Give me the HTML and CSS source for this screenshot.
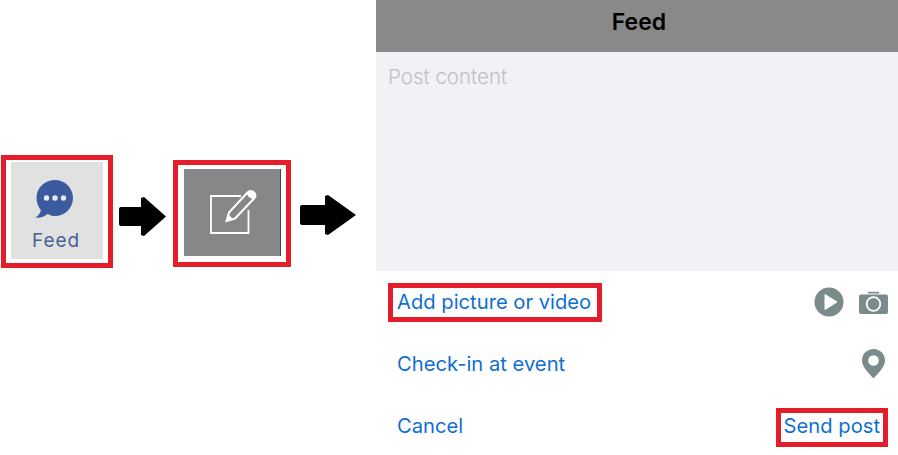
FILE: index.html
```html
<!DOCTYPE html>
<html lang="en">
<head>
  <meta charset="UTF-8">
  <meta name="viewport" content="width=device-width, initial-scale=1.0">
  <title>Feed</title>
  <link rel="stylesheet" href="styles.css">
</head>
<body>
  <div class="container">
    <div class="steps">
      <div class="red-box feed-box">
        <div class="feed-tile">
          <svg class="feed-icon" width="38" height="40" viewBox="0 0 38 40">
            <path d="M20 1C9.500 1 1.500 8.800 1.500 19c0 4.600 1.700 8.800 4.400 12C5.400 34 3.500 37 0.500 38.500c4.500 .6 9-1 12-3.600C14.800 36 17.300 37 20 37c10 0 18-8 18-18S30 1 20 1z" fill="#3c5a9e"/>
            <circle cx="11.500" cy="19" r="2.700" fill="#e6ebf5"/>
            <circle cx="20" cy="19" r="2.700" fill="#e6ebf5"/>
            <circle cx="28.500" cy="19" r="2.700" fill="#e6ebf5"/>
          </svg>
          <span class="feed-label">Feed</span>
        </div>
      </div>
      <svg class="arrow arrow-one" width="47" height="39" viewBox="0 0 47 39">
        <path d="M2 10H22V1L25 0L47 19.500L25 39L22 38V29H2Q0 29 0 27V12Q0 10 2 10z"/>
      </svg>
      <div class="red-box edit-box">
        <div class="edit-tile">
          <svg width="48" height="48" viewBox="0 0 48 48" fill="none">
            <path d="M31 10H1V47H38.500V24" stroke="#fff" stroke-width="1.800"/>
            <path d="M16.500 35L19 26.500L37.500 6.500C39.500 4.500 42 4.500 44 6.500C46 8.500 46 10.500 44 12.500L25 32.500Z" stroke="#fff" stroke-width="2"/>
            <path d="M37 7L43.500 13" stroke="#fff" stroke-width="2"/>
            <path d="M16.500 35L19 29L22.500 32.500Z" fill="#fff"/>
            <circle cx="41.500" cy="8.500" r="3.500" fill="#fff"/>
          </svg>
        </div>
      </div>
      <svg class="arrow arrow-two" width="56" height="40" viewBox="0 0 56 40">
        <path d="M2 10H25V1L28 0L56 20L28 40L25 39V30H2Q0 30 0 28V12Q0 10 2 10z"/>
      </svg>
    </div>

    <div class="phone">
      <div class="phone-head">Feed</div>
      <div class="post-area">Post content</div>
      <div class="row">
        <span class="action highlight add-action">Add picture or video</span>
        <div class="row-icons">
          <svg width="30" height="30" viewBox="0 0 30 30">
            <circle cx="15" cy="15" r="14.500" fill="#7a8b8b"/>
            <path d="M11 7.500L23 15L11 22.500Z" fill="#fff" stroke="#fff" stroke-width="1" stroke-linejoin="round"/>
          </svg>
          <svg width="29" height="23" viewBox="0 0 29 23">
            <path d="M9 2.500H20V0.800H9z" fill="#7a8b8b"/>
            <path d="M2 3.500H27Q29 3.500 29 5.500V21Q29 23 27 23H2Q0 23 0 21V5.500Q0 3.500 2 3.500z" fill="#7a8b8b"/>
            <circle cx="14.500" cy="13" r="6.800" fill="#7a8b8b" stroke="#fff" stroke-width="1.800"/>
          </svg>
        </div>
      </div>
      <div class="row">
        <span class="action">Check-in at event</span>
        <svg class="pin" width="23" height="30" viewBox="0 0 23 30">
          <path fill-rule="evenodd" d="M11.500 0C5 0 0 5 0 11.500C0 18 7 24.500 11.500 29.500C16 24.500 23 18 23 11.500C23 5 18 0 11.500 0zM11.500 6.200A5.300 5.300 0 1 1 11.500 16.800A5.300 5.300 0 1 1 11.500 6.200z" fill="#7a8b8b"/>
        </svg>
      </div>
      <div class="row last-row">
        <span class="action">Cancel</span>
        <span class="action highlight send-action">Send post</span>
      </div>
    </div>
  </div>
</body>
</html>
```

FILE: styles.css
```css
* {
  margin: 0;
  padding: 0;
  box-sizing: border-box;
}
html, body {
  width: 100%;
  height: 100%;
  overflow: hidden;
  background: #fff;
  font-family: Inter, "Liberation Sans", sans-serif;
}
.container {
  display: flex;
  width: 100%;
  height: 100%;
}
.steps {
  width: 376px;
  display: flex;
  align-items: flex-start;
  padding: 155px 0 0 1px;
}
.red-box {
  border: 5px solid #e51d2a;
  background: #fff;
  flex-shrink: 0;
}
.feed-box {
  width: 112px;
  height: 113px;
  padding: 2px 5px;
}
.feed-tile {
  width: 92px;
  height: 97px;
  background: #e1e1e1;
  display: flex;
  flex-direction: column;
  align-items: center;
  padding: 17px 2px 0 0;
}
.feed-icon {
  margin-right: 4px;
}
.feed-label {
  margin-top: 10px;
  font-size: 19px;
  line-height: 24px;
  letter-spacing: 0.9px;
  color: #4a5f94;
}
.arrow {
  flex-shrink: 0;
  fill: #000;
}
.arrow-one {
  margin: 42px 7px 0 6px;
}
.edit-box {
  width: 118px;
  height: 107px;
  margin-top: 5px;
  padding: 4px 5px 0 6px;
}
.edit-tile {
  width: 97px;
  height: 87px;
  background: #878787;
  border-right: 1px solid #444;
  display: flex;
  align-items: center;
  justify-content: center;
  padding: 0 0 6px 4px;
}
.arrow-two {
  margin: 40px 0 0 9px;
}
.phone {
  flex: 1;
  display: flex;
  flex-direction: column;
}
.phone-head {
  height: 52px;
  background: #898989;
  color: #000;
  font-size: 23px;
  font-weight: 600;
  line-height: 44px;
  text-align: center;
  padding-left: 4px;
}
.post-area {
  height: 219px;
  background: #f1f1f6;
  color: #c0c0c4;
  font-size: 20.500px;
  font-weight: 300;
  line-height: 50px;
  padding-left: 12px;
}
.row {
  height: 62px;
  display: flex;
  align-items: center;
  justify-content: space-between;
  padding: 0 10px 0 21px;
}
.last-row {
  height: 60px;
  padding-top: 2px;
}
.action {
  color: #0f6fd0;
  font-size: 20.200px;
  line-height: 24px;
}
.highlight {
  border: 5px solid #e51d2a;
}
.add-action {
  margin: 1px 0 0 -9px;
  padding: 2px 6px 3px 4px;
}
.send-action {
  margin-top: 3px;
  padding: 1px 3px 4px;
}
.row-icons {
  display: flex;
  align-items: center;
  gap: 15px;
}
.pin {
  margin-right: 3px;
}
```
